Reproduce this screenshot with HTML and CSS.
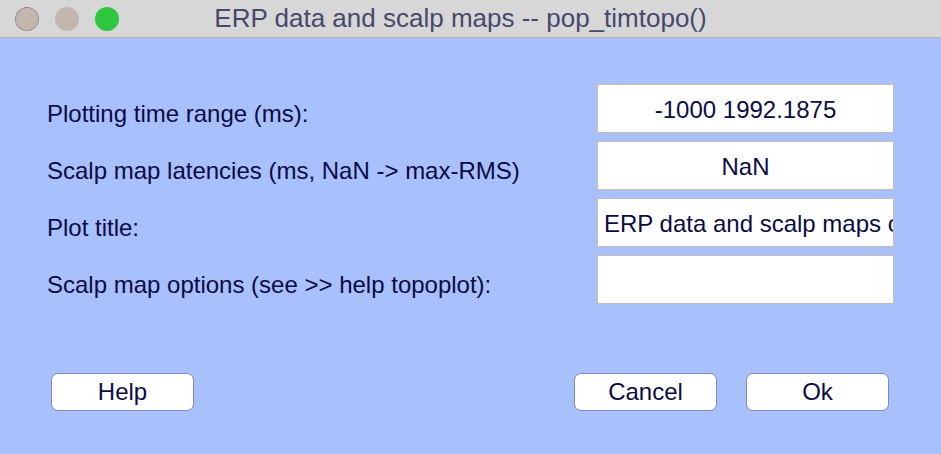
FILE: index.html
```html
<!DOCTYPE html>
<html>
<head>
<meta charset="utf-8">
<link rel="stylesheet" href="styles.css">
</head>
<body>
<div class="window">
  <div class="titlebar">
    <div class="lights">
      <span class="light close"></span>
      <span class="light min"></span>
      <span class="light max"></span>
    </div>
    <div class="title">ERP data and scalp maps -- pop_timtopo()</div>
  </div>
  <div class="content">
    <div class="rows">
      <div class="row">
        <div class="label">Plotting time range (ms):</div>
        <div class="field center">-1000 1992.1875</div>
      </div>
      <div class="row">
        <div class="label">Scalp map latencies (ms, NaN -&gt; max-RMS)</div>
        <div class="field center">NaN</div>
      </div>
      <div class="row">
        <div class="label">Plot title:</div>
        <div class="field left">ERP data and scalp maps of</div>
      </div>
      <div class="row">
        <div class="label">Scalp map options (see &gt;&gt; help topoplot):</div>
        <div class="field"></div>
      </div>
    </div>
    <div class="buttons">
      <button class="btn">Help</button>
      <div class="spacer"></div>
      <button class="btn">Cancel</button>
      <button class="btn ok">Ok</button>
    </div>
  </div>
</div>
</body>
</html>
```

FILE: styles.css
```css
html, body {
  margin: 0;
  padding: 0;
  background: #a8c0fb;
}
body {
  width: 941px;
  height: 454px;
  overflow: hidden;
  font-family: "Liberation Sans", Arial, sans-serif;
}
.window {
  width: 941px;
  height: 454px;
  display: flex;
  flex-direction: column;
  background: #a8c0fb;
}
.titlebar {
  height: 37px;
  background: #d7d7d7;
  border-bottom: 1px solid #b9b2ab;
  display: flex;
  align-items: center;
  position: relative;
  flex: none;
}
.lights {
  display: flex;
  gap: 16px;
  padding-left: 15px;
}
.light {
  width: 24px;
  height: 24px;
  border-radius: 50%;
  background: #c2b6ad;
  box-sizing: border-box;
}
.light.close {
  border: 1px dotted #6a6680;
}
.light.max {
  background: #2ec840;
}
.title {
  position: absolute;
  left: 0;
  right: 0;
  top: 0;
  line-height: 36px;
  text-align: center;
  font-size: 26px;
  color: #46496c;
  padding-right: 20px;
}
.content {
  flex: 1;
  display: flex;
  flex-direction: column;
}
.rows {
  padding: 46px 47px 0 47px;
  display: flex;
  flex-direction: column;
  gap: 8px;
}
.row {
  display: flex;
  align-items: center;
  justify-content: space-between;
  height: 49px;
}
.label {
  font-size: 24px;
  color: #0b0b45;
  padding-top: 10px;
}
.field {
  width: 297px;
  height: 49px;
  box-sizing: border-box;
  background: #fff;
  border: 1px solid #c8bcb0;
  font-size: 24px;
  color: #0b0b45;
  display: flex;
  align-items: center;
  white-space: nowrap;
  overflow: hidden;
  padding-top: 3px;
}
.field.center {
  justify-content: center;
}
.field.left {
  padding-left: 6px;
}
.buttons {
  display: flex;
  padding: 69px 52px 0 51px;
  gap: 29px;
}
.spacer {
  flex: 1;
}
.btn {
  width: 143px;
  height: 38px;
  background: #fff;
  border: 1px solid #8088c0;
  border-radius: 7px;
  font-family: "Liberation Sans", Arial, sans-serif;
  font-size: 24px;
  color: #0b0b45;
  padding: 0;
}
```
